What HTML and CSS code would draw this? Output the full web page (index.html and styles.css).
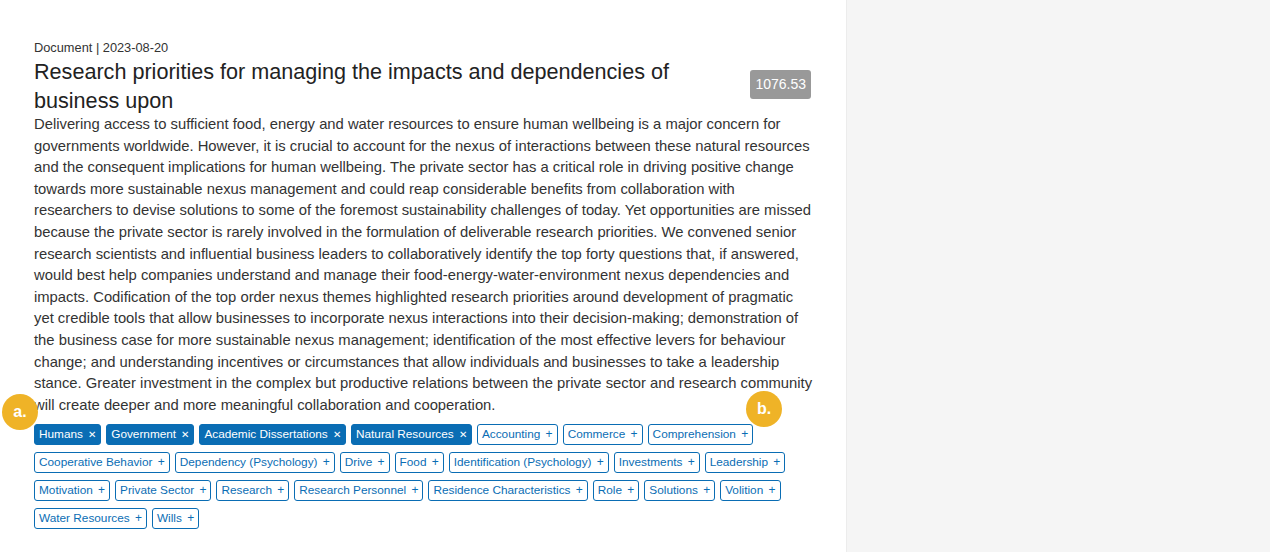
FILE: index.html
```html
<!DOCTYPE html>
<html lang="en">

<head>
  <meta charset="UTF-8">
  <meta name="viewport" content="width=device-width, initial-scale=1.0">
  <title>Document</title>

  <link rel="stylesheet" href="styles.css">
</head>

<body>
  <div class="page">
    <div class="main">
      <p class="meta">Document | 2023-08-20</p>

      <div class="title-row">
        <h1 class="title">Research priorities for managing the impacts and dependencies of business upon</h1>
        <span class="score">1076.53</span>
      </div>

      <p class="abstract">Delivering access to sufficient food, energy and water resources to ensure human wellbeing is a major concern for governments worldwide. However, it is crucial to account for the nexus of interactions between these natural resources and the consequent implications for human wellbeing. The private sector has a critical role in driving positive change towards more sustainable nexus management and could reap considerable benefits from collaboration with researchers to devise solutions to some of the foremost sustainability challenges of today. Yet opportunities are missed because the private sector is rarely involved in the formulation of deliverable research priorities. We convened senior research scientists and influential business leaders to collaboratively identify the top forty questions that, if answered, would best help companies understand and manage their food-energy-water-environment nexus dependencies and impacts. Codification of the top order nexus themes highlighted research priorities around development of pragmatic yet credible tools that allow businesses to incorporate nexus interactions into their decision-making; demonstration of the business case for more sustainable nexus management; identification of the most effective levers for behaviour change; and understanding incentives or circumstances that allow individuals and businesses to take a leadership stance. Greater investment in the complex but productive relations between the private sector and research community will create deeper and more meaningful collaboration and cooperation.</p>

      <ul class="tags">
        <li class="tag on">Humans <span class="ico">&#x2715;</span></li>
        <li class="tag on">Government <span class="ico">&#x2715;</span></li>
        <li class="tag on">Academic Dissertations <span class="ico">&#x2715;</span></li>
        <li class="tag on">Natural Resources <span class="ico">&#x2715;</span></li>
        <li class="tag">Accounting <span class="ico">+</span></li>
        <li class="tag">Commerce <span class="ico">+</span></li>
        <li class="tag">Comprehension <span class="ico">+</span></li>
        <li class="tag">Cooperative Behavior <span class="ico">+</span></li>
        <li class="tag">Dependency (Psychology) <span class="ico">+</span></li>
        <li class="tag">Drive <span class="ico">+</span></li>
        <li class="tag">Food <span class="ico">+</span></li>
        <li class="tag">Identification (Psychology) <span class="ico">+</span></li>
        <li class="tag">Investments <span class="ico">+</span></li>
        <li class="tag">Leadership <span class="ico">+</span></li>
        <li class="tag">Motivation <span class="ico">+</span></li>
        <li class="tag">Private Sector <span class="ico">+</span></li>
        <li class="tag">Research <span class="ico">+</span></li>
        <li class="tag">Research Personnel <span class="ico">+</span></li>
        <li class="tag">Residence Characteristics <span class="ico">+</span></li>
        <li class="tag">Role <span class="ico">+</span></li>
        <li class="tag">Solutions <span class="ico">+</span></li>
        <li class="tag">Volition <span class="ico">+</span></li>
        <li class="tag">Water Resources <span class="ico">+</span></li>
        <li class="tag">Wills <span class="ico">+</span></li>
      </ul>

      <!-- annotation markers -->
      <span class="marker marker-a">a.</span>
      <span class="marker marker-b">b.</span>
    </div>

    <div class="side"></div>
  </div>
</body>

</html>
```

FILE: styles.css
```css
* {
  margin: 0;
  padding: 0;
  box-sizing: border-box;
}

body {
  font-family: "Liberation Sans", Arial, sans-serif;
  color: #333;
  background-color: #fff;
}

li {
  list-style: none;
}

.page {
  display: flex;
  height: 552px;
}

.main {
  position: relative;
  width: 846px;
  padding: 40px 33px 0 34px;
}

.side {
  flex: 1;
  background-color: #f5f5f5;
  border-left: 1px solid #ececec;
}

.meta {
  font-size: 12.8px;
  line-height: 15px;
  color: #333;
}

.title-row {
  display: flex;
  align-items: center;
  gap: 24px;
  margin-top: 2px;
}

.title {
  flex: 1;
  font-size: 21.6px;
  font-weight: normal;
  line-height: 29px;
  color: #222;
}

.score {
  margin-top: -3px;
  margin-right: 2px;
  padding: 6px 5px;
  border-radius: 3px;
  background-color: #999;
  color: #fff;
  font-size: 14px;
  line-height: 17px;
}

.abstract {
  margin-top: -1px;
  font-size: 14.8px;
  line-height: 21.6px;
  color: #333;
}

.tags {
  display: flex;
  flex-wrap: wrap;
  gap: 7px 5px;
  margin-top: 8px;
}

.tag {
  padding: 3px 4px;
  border: 1px solid #0a6db4;
  border-radius: 3px;
  color: #0a6db4;
  background-color: #fff;
  font-size: 11.8px;
  line-height: 13px;
}

.tag.on {
  background-color: #0a6db4;
  color: #fff;
}

.ico {
  margin-left: 2px;
  font-size: 12px;
}

.tag.on .ico {
  font-size: 10px;
}

.marker {
  position: absolute;
  width: 36px;
  height: 36px;
  border-radius: 50%;
  background-color: #efb327;
  color: #fff;
  font-size: 16px;
  font-weight: bold;
  line-height: 36px;
  text-align: center;
}

.marker-a {
  left: 2px;
  top: 394px;
}

.marker-b {
  left: 746px;
  top: 391px;
}
```
